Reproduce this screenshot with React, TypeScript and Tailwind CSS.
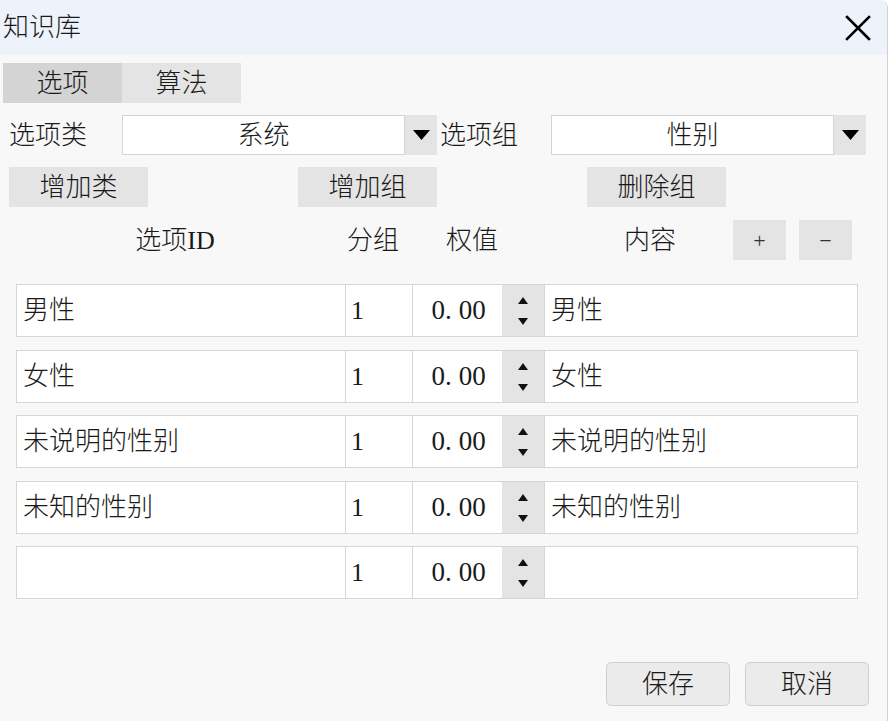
import React from 'react';

const FONT = { fontFamily: '"Liberation Serif", "Noto Sans CJK SC", serif' };

const rows = ['男性', '女性', '未说明的性别', '未知的性别', ''];

function DownTriangle() {
  return (
    <svg width="17" height="10" viewBox="0 0 17 10">
      <path d="M0 0 L17 0 L8.5 10 Z" fill="#000" />
    </svg>
  );
}

function Select({ value, width }: { value: string; width: string }) {
  return (
    <div className={`flex h-[40px] ${width}`}>
      <div className="flex flex-1 items-center justify-center border border-[#d4d4d4] bg-white">{value}</div>
      <div className="flex w-[32px] items-center justify-center bg-[#e4e4e4]">
        <DownTriangle />
      </div>
    </div>
  );
}

function Spinner() {
  return (
    <div className="flex w-[42px] flex-col items-center justify-between bg-[#e4e4e4] pb-[11px] pt-[12px]">
      <svg width="10" height="7" viewBox="0 0 10 7">
        <path d="M0 7 L10 7 L5 0 Z" fill="#111" />
      </svg>
      <svg width="10" height="7" viewBox="0 0 10 7">
        <path d="M0 0 L10 0 L5 7 Z" fill="#111" />
      </svg>
    </div>
  );
}

function OptionRow({ label }: { label: string }) {
  return (
    <div className="flex h-[53px] text-[26px]">
      <div className="flex w-[330px] items-center border border-[#d6d6d6] bg-white pl-[6px]">{label}</div>
      <div className="flex w-[67px] items-center border border-l-0 border-[#d6d6d6] bg-white pl-[5px] font-normal">1</div>
      <div className="flex w-[132px] border border-l-0 border-[#d6d6d6] bg-white">
        <div className="flex flex-1 items-center justify-center pl-[2px] text-[27px] font-normal">
          <span>0.</span>
          <span className="ml-[7px]">00</span>
        </div>
        <Spinner />
      </div>
      <div className="flex w-[313px] items-center border border-l-0 border-[#d6d6d6] bg-white pl-[6px]">{label}</div>
    </div>
  );
}

export default function App() {
  return (
    <div className="flex h-[721px] w-[891px] bg-white font-light" style={FONT}>
      <div className="flex h-full w-[888px] flex-col overflow-hidden rounded-tr-[8px] border-r border-[#d0d0d0] bg-[#f8f8f8] text-[26px] text-[#1a1a1a]">
        {/* title bar */}
        <div className="flex h-[55px] items-center justify-between bg-[#eef3fb] pl-[3px] pr-[16px]">
          <span className="text-[26px]">知识库</span>
          <svg width="26" height="26" viewBox="0 0 26 26">
            <path d="M2 2 L24 24 M24 2 L2 24" stroke="#000" strokeWidth="2.6" strokeLinecap="square" />
          </svg>
        </div>

        {/* tabs */}
        <div className="ml-[3px] mt-[8px] flex h-[40px]">
          <div className="flex w-[119px] items-center justify-center bg-[#d4d4d4]">选项</div>
          <div className="flex w-[119px] items-center justify-center bg-[#e4e4e4]">算法</div>
        </div>

        {/* selectors */}
        <div className="mt-[12px] flex h-[40px] items-center">
          <span className="w-[122px] pl-[9px]">选项类</span>
          <Select value="系统" width="w-[315px]" />
          <span className="w-[114px] pl-[3px]">选项组</span>
          <Select value="性别" width="w-[315px]" />
        </div>

        {/* actions */}
        <div className="ml-[9px] mt-[12px] flex h-[40px] gap-[150px]">
          <div className="flex w-[139px] items-center justify-center bg-[#e4e4e4]">增加类</div>
          <div className="flex w-[139px] items-center justify-center bg-[#e4e4e4]">增加组</div>
          <div className="flex w-[139px] items-center justify-center bg-[#e4e4e4]">删除组</div>
        </div>

        {/* header */}
        <div className="ml-[16px] mt-[13px] flex h-[40px] items-center">
          <div className="w-[318px] text-center">
            选项<span className="font-normal">ID</span>
          </div>
          <div className="ml-[12px] w-[54px] text-center">分组</div>
          <div className="ml-[40px] w-[64px] text-center">权值</div>
          <div className="ml-[96px] w-[100px] text-center">内容</div>
          <div className="ml-[33px] flex h-[40px] w-[53px] items-center justify-center bg-[#e4e4e4] text-[22px] text-[#333]">+</div>
          <div className="ml-[13px] flex h-[40px] w-[53px] items-center justify-center bg-[#e4e4e4] text-[22px] text-[#333]">−</div>
        </div>

        {/* rows */}
        <div className="ml-[16px] mt-[24px] flex flex-col gap-[12.5px]">
          {rows.map((r, i) => (
            <OptionRow key={i} label={r} />
          ))}
        </div>

        {/* footer */}
        <div className="mt-auto flex justify-end gap-[15px] pb-[15px] pr-[18px]">
          <div className="flex h-[44px] w-[124px] items-center justify-center rounded-[5px] border border-[#cfcfcf] bg-[#ebebeb]">保存</div>
          <div className="flex h-[44px] w-[124px] items-center justify-center rounded-[5px] border border-[#cfcfcf] bg-[#ebebeb]">取消</div>
        </div>
      </div>
    </div>
  );
}
